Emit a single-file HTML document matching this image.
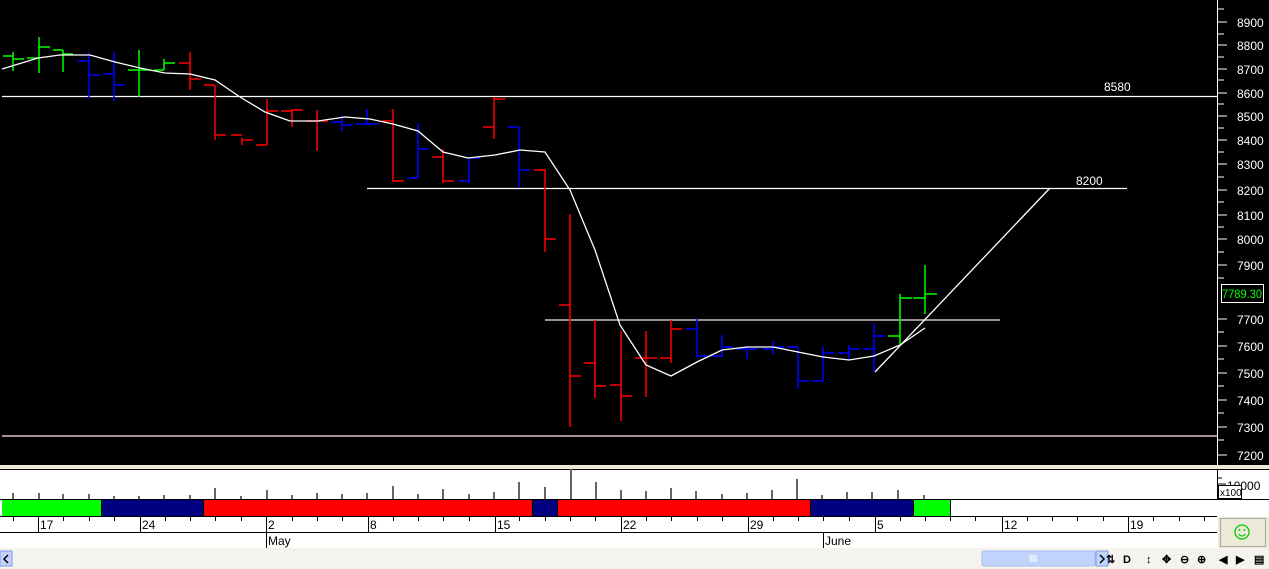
<!DOCTYPE html>
<html><head><meta charset="utf-8"><style>
body{margin:0;width:1269px;height:569px;overflow:hidden;background:#ece9d8;font-family:"Liberation Sans",sans-serif}
svg{display:block}
</style></head><body>
<svg width="1269" height="569" xmlns="http://www.w3.org/2000/svg" font-family="Liberation Sans, sans-serif">
<rect x="0" y="0" width="1269" height="465" fill="#000"/>
<rect x="0" y="465" width="1269" height="4" fill="#ece9d8"/>
<rect x="0" y="469" width="1269" height="79" fill="#fff"/>
<line x1="1217.5" y1="0" x2="1217.5" y2="465" stroke="#fff"/>
<g stroke="#fff" fill="#fff" font-size="12">
<g stroke-width="1">
<line x1="1218" y1="9" x2="1224" y2="9"/><line x1="1218" y1="22" x2="1227" y2="22"/>
<line x1="1218" y1="34" x2="1224" y2="34"/><line x1="1218" y1="45" x2="1227" y2="45"/>
<line x1="1218" y1="57" x2="1224" y2="57"/><line x1="1218" y1="69" x2="1227" y2="69"/>
<line x1="1218" y1="80" x2="1224" y2="80"/><line x1="1218" y1="93" x2="1227" y2="93"/>
<line x1="1218" y1="104" x2="1224" y2="104"/><line x1="1218" y1="116" x2="1227" y2="116"/>
<line x1="1218" y1="128" x2="1224" y2="128"/><line x1="1218" y1="140" x2="1227" y2="140"/>
<line x1="1218" y1="152" x2="1224" y2="152"/><line x1="1218" y1="164" x2="1227" y2="164"/>
<line x1="1218" y1="177" x2="1224" y2="177"/><line x1="1218" y1="190" x2="1227" y2="190"/>
<line x1="1218" y1="202" x2="1224" y2="202"/><line x1="1218" y1="215" x2="1227" y2="215"/>
<line x1="1218" y1="227" x2="1224" y2="227"/><line x1="1218" y1="239" x2="1227" y2="239"/>
<line x1="1218" y1="252" x2="1224" y2="252"/><line x1="1218" y1="265" x2="1227" y2="265"/>
<line x1="1218" y1="278" x2="1224" y2="278"/><line x1="1218" y1="319" x2="1227" y2="319"/>
<line x1="1218" y1="332" x2="1224" y2="332"/><line x1="1218" y1="346" x2="1227" y2="346"/>
<line x1="1218" y1="359" x2="1224" y2="359"/><line x1="1218" y1="373" x2="1227" y2="373"/>
<line x1="1218" y1="386" x2="1224" y2="386"/><line x1="1218" y1="400" x2="1227" y2="400"/>
<line x1="1218" y1="413" x2="1224" y2="413"/><line x1="1218" y1="427" x2="1227" y2="427"/>
<line x1="1218" y1="440" x2="1224" y2="440"/><line x1="1218" y1="455" x2="1227" y2="455"/>
</g>
<g stroke="none">
<text x="1237" y="27">8900</text><text x="1237" y="50">8800</text><text x="1237" y="74">8700</text>
<text x="1237" y="98">8600</text><text x="1237" y="121">8500</text><text x="1237" y="145">8400</text>
<text x="1237" y="169">8300</text><text x="1237" y="195">8200</text><text x="1237" y="220">8100</text>
<text x="1237" y="244">8000</text><text x="1237" y="270">7900</text><text x="1237" y="324">7700</text>
<text x="1237" y="351">7600</text><text x="1237" y="378">7500</text><text x="1237" y="405">7400</text>
<text x="1237" y="432">7300</text><text x="1237" y="460">7200</text>
</g>
</g>
<rect x="1221.5" y="284.5" width="42" height="18" fill="#000" stroke="#fff"/>
<text x="1222" y="298" fill="#00ff00" font-size="12" textLength="40" lengthAdjust="spacingAndGlyphs">7789.30</text>
<g stroke="#fff" stroke-width="1.3">
<line x1="2" y1="96.5" x2="1217" y2="96.5"/>
<line x1="367" y1="188.5" x2="1127" y2="188.5"/>
<line x1="545" y1="320" x2="1000" y2="320" stroke="#ffe8e8"/>
<line x1="2" y1="436" x2="1217" y2="436" stroke="#ffe8e8"/>
<line x1="875" y1="372" x2="1050" y2="188"/>
</g>
<text x="1104" y="91" fill="#fff" font-size="12">8580</text>
<text x="1076" y="185" fill="#fff" font-size="12">8200</text>
<g stroke-width="1.5" fill="none">
<path stroke="#00ff00" d="M13 52V71M3 56H13M13 59H24 M39 37V73M27 58H39M39 47H50 M63 50V72M53 50H63M63 54H73 M139 50V97M128 70H139M139 70H150 M164 59V70M154 70H164M164 63H175 M900 294V344M888 336H900M900 298H912 M925 265V314M913 298H925M925 294H937"/>
<path stroke="#0000ff" d="M89 52V99M78 61H89M89 75H100 M114 52V101M103 74H114M114 85H125 M342 115V131M331 122H342M342 125H353 M367 109V125M356 124H367M367 124H378 M418 123V178M407 178H418M418 149H429 M469 158V183M458 181H469M469 158H480 M519 127V188M508 127H519M519 170H530 M697 318V357M686 329H697M697 356H708 M722 335V357M711 356H722M722 347H733 M747 346V359M736 349H747M747 349H758 M773 341V354M762 349H773M773 347H784 M798 347V389M787 347H798M798 381H809 M823 347V381M812 381H823M823 353H834 M849 345V360M838 353H849M849 349H860 M874 323V372M863 349H874M874 336H885"/>
<path stroke="#ff0000" d="M190 52V90M179 63H190M190 79H201 M215 85V140M204 85H215M215 135H226 M242 138V145M231 135H242M242 140H253 M267 99V145M256 145H267M267 111H278 M292 109V127M281 111H292M292 110H303 M317 110V151M306 121H317M317 121H328 M393 109V182M382 121H393M393 181H404 M443 149V183M432 157H443M443 181H454 M494 97V139M483 127H494M494 99H505 M545 169V252M534 170H545M545 239H556 M570 214V427M559 305H570M570 376H581 M595 320V398M584 363H595M595 386H606 M621 331V421M610 385H621M621 396H632 M646 331V397M635 358H646M646 358H657 M671 320V363M660 358H671M671 329H682"/>
</g>
<polyline fill="none" stroke="#fff" stroke-width="1.3" points="2,69 38,58 60,55 90,55 115,62 140,68 165,73 190,74 215,80 240,97 265,112 290,121 318,121 345,117 370,119 393,124 418,131 443,152 468,158 495,155 520,150 545,152 570,190 595,250 620,325 646,365 671,376 697,362 722,350 747,347 773,347 798,352 823,357 849,360 874,356 900,345 925,328"/>
<line x1="0" y1="469.5" x2="1269" y2="469.5" stroke="#000"/>
<line x1="1217.5" y1="469" x2="1217.5" y2="499" stroke="#000"/>
<line x1="1218" y1="478" x2="1222" y2="478" stroke="#000"/>
<line x1="1218" y1="484" x2="1226" y2="484" stroke="#000"/>
<text x="1227" y="490" font-size="12" fill="#000">10000</text>
<rect x="1218.5" y="485.5" width="23" height="13" fill="#fff" stroke="#000"/>
<text x="1220" y="496" font-size="10" fill="#000">x100</text>
<g stroke="#666" stroke-width="2">
<path d="M13 493V499M39 493V499M63 494V499M89 494V499M114 496V499M139 496V499M164 495V499M190 495V499M215 488V499M241 496V499M267 490V499M292 495V499M317 493V499M342 494V499M367 493V499M393 486V499M418 494V499M443 489V499M469 494V499M494 492V499M519 482V499M545 487V499M571 469V499M596 482V499M621 490V499M646 491V499M671 488V499M696 491V499M722 494V499M747 493V499M772 490V499M797 479V499M822 495V499M847 492V499M872 492V499M898 490V499M924 495V499"/>
</g>
<line x1="0" y1="499.5" x2="1269" y2="499.5" stroke="#000"/>
<rect x="2" y="500" width="99" height="16" fill="#00ff00"/>
<rect x="101" y="500" width="102" height="16" fill="#000080"/>
<rect x="203" y="500" width="329" height="16" fill="#ff0000"/>
<rect x="532" y="500" width="25" height="16" fill="#000080"/>
<rect x="557" y="500" width="253" height="16" fill="#ff0000"/>
<rect x="810" y="500" width="103" height="16" fill="#000080"/>
<rect x="913" y="500" width="37" height="16" fill="#00ff00"/>
<g stroke="#000" stroke-width="1">
<line x1="101.5" y1="500" x2="101.5" y2="516"/><line x1="203.5" y1="500" x2="203.5" y2="516"/>
<line x1="532.5" y1="500" x2="532.5" y2="516"/><line x1="557.5" y1="500" x2="557.5" y2="516"/>
<line x1="810.5" y1="500" x2="810.5" y2="516"/><line x1="913.5" y1="500" x2="913.5" y2="516"/>
<line x1="950.5" y1="500" x2="950.5" y2="516"/>
<line x1="0" y1="516.5" x2="1217" y2="516.5"/>
<line x1="0" y1="532.5" x2="1217" y2="532.5"/>
</g>
<g stroke="#000">
<path d="M13.5 517V521M63.5 517V521M89.5 517V521M114.5 517V521M165.5 517V521M190.5 517V521M215.5 517V521M241.5 517V521M292.5 517V521M317.5 517V521M342.5 517V521M393.5 517V521M418.5 517V521M443.5 517V521M469.5 517V521M519.5 517V521M545.5 517V521M570.5 517V521M595.5 517V521M646.5 517V521M671.5 517V521M697.5 517V521M722.5 517V521M773.5 517V521M798.5 517V521M823.5 517V521M849.5 517V521M900.5 517V521M925.5 517V521M950.5 517V521M975.5 517V521M1027.5 517V521M1052.5 517V521M1077.5 517V521M1103.5 517V521M1153.5 517V521M1179.5 517V521M1204.5 517V521"/>
<path d="M38.5 517V532M140.5 517V532M266.5 517V532M368.5 517V532M495.5 517V532M621.5 517V532M748.5 517V532M875.5 517V532M1002.5 517V532M1128.5 517V532M266.5 532V548M823.5 532V548"/>
</g>
<g font-size="12" fill="#000">
<text x="40" y="529">17</text><text x="142" y="529">24</text><text x="268" y="529">2</text>
<text x="370" y="529">8</text><text x="497" y="529">15</text><text x="623" y="529">22</text>
<text x="750" y="529">29</text><text x="877" y="529">5</text><text x="1004" y="529">12</text>
<text x="1130" y="529">19</text>
<text x="268" y="545">May</text><text x="825" y="545">June</text>
</g>
<rect x="0" y="548" width="1269" height="21" fill="#f4f3ee"/>
<rect x="0" y="551" width="12" height="15" fill="#c1d3fb" stroke="#7d9be0"/>
<path d="M8 555L4 559L8 563" stroke="#000" fill="none" stroke-width="1.5"/>
<rect x="982" y="551" width="113" height="15" rx="2" fill="#c1d3fb" stroke="#a8bff0"/>
<path d="M1030 555V562M1032 555V562M1034 555V562M1036 555V562" stroke="#fff"/>
<rect x="1096" y="551" width="12" height="15" fill="#c1d3fb" stroke="#7d9be0"/>
<path d="M1100 555L1104 559L1100 563" stroke="#000" fill="none" stroke-width="1.5"/>
<g font-size="11" fill="#000" font-weight="bold">
<text x="1106" y="563">⇅</text><text x="1123" y="563">D</text><text x="1146" y="563">↕</text>
<text x="1162" y="563">✥</text><text x="1180" y="563">⊖</text><text x="1197" y="563">⊕</text>
<text x="1219" y="563">◀</text><text x="1236" y="563">▶</text><text x="1254" y="563">▤</text>
</g>
<rect x="1218" y="517" width="51" height="31" fill="#ece9d8"/>
<rect x="1220.5" y="518.5" width="45" height="28" fill="#ece9d8" stroke="#aca899"/>
<circle cx="1242" cy="532" r="7" fill="none" stroke="#00cc00" stroke-width="1.3"/>
<circle cx="1239.5" cy="530" r="1" fill="#00cc00"/><circle cx="1244.5" cy="530" r="1" fill="#00cc00"/>
<path d="M1238.5 534Q1242 538 1245.5 534" stroke="#00cc00" fill="none"/>
</svg>
</body></html>
